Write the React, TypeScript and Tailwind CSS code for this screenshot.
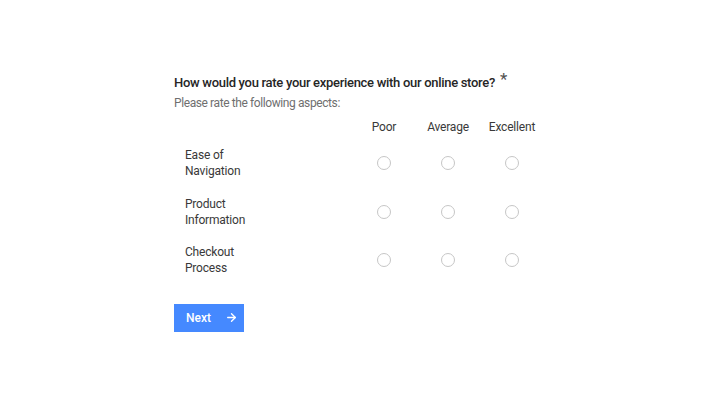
import { ArrowRight } from "lucide-react";

const rows = [
  ["Ease of", "Navigation"],
  ["Product", "Information"],
  ["Checkout", "Process"],
];
const cols = ["Poor", "Average", "Excellent"];

export default function App() {
  return (
    <main
      className="h-[405px] w-[720px] bg-white text-[#161616]"
      style={{ fontFamily: 'Roboto, "Noto Sans", sans-serif' }}
    >
      <div className="pl-[174px] pt-[72px]">
        {/* question */}
        <div className="flex items-start">
          <h1 className="text-[13px] font-medium leading-[22px] tracking-[-0.3px] text-[#262626]">
            How would you rate your experience with our online store?
          </h1>
          <span className="ml-[5px] -mt-[4px] text-[17px] leading-[22px] text-[#525252]">*</span>
        </div>
        <p className="-mt-[1px] text-[12px] leading-[20px] tracking-[-0.4px] text-[#6f6f6f]">
          Please rate the following aspects:
        </p>

        {/* matrix */}
        <div className="mt-[2px] w-[370px]">
          <div className="flex h-[24px] items-center text-[12px] tracking-[-0.2px] text-[#393939]">
            <div className="w-[178px]" />
            {cols.map((c) => (
              <div key={c} className="w-[64px] text-center">
                {c}
              </div>
            ))}
          </div>
          <div>
            {rows.map((r) => (
              <div key={r[0]} className="flex h-[48.5px] items-center">
                <div className="w-[178px] pl-[11px] text-[12px] leading-[16px] tracking-[-0.2px] text-[#393939]">
                  <div>{r[0]}</div>
                  <div>{r[1]}</div>
                </div>
                {cols.map((c) => (
                  <div key={c} className="flex w-[64px] justify-center">
                    <span className="block h-[14px] w-[14px] rounded-full border border-[#c6c6c6] bg-white" />
                  </div>
                ))}
              </div>
            ))}
          </div>
        </div>

        {/* next */}
        <button className="mt-[19px] flex h-[28px] w-[70px] items-center bg-[#4589ff] pl-[12px] text-[12px] font-medium text-white">
          Next
          <ArrowRight className="ml-[14px] h-[13px] w-[13px]" strokeWidth={2.5} />
        </button>
      </div>
    </main>
  );
}
